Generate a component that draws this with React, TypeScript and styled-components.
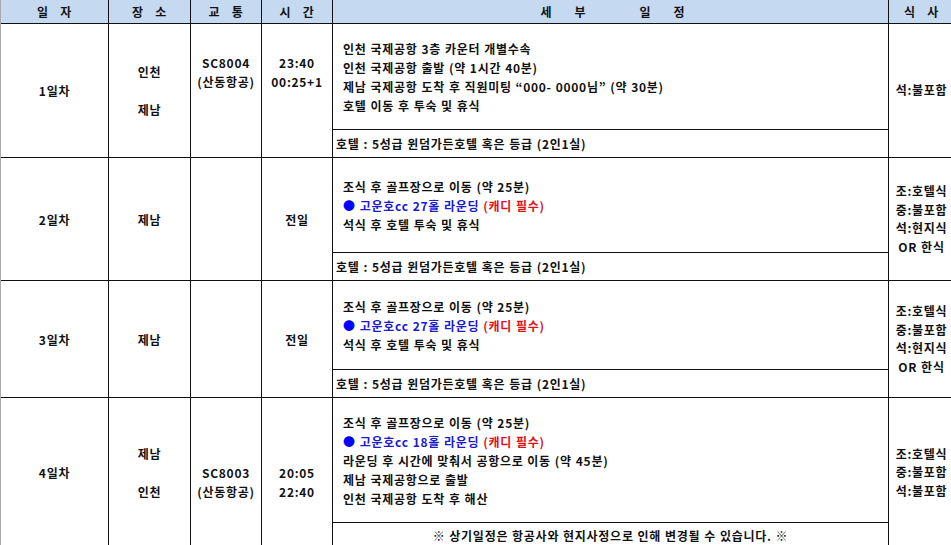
import React from 'react';
import styled, { createGlobalStyle } from 'styled-components';

const GlobalStyle = createGlobalStyle`
  html, body {
    margin: 0;
    padding: 0;
    background: #fff;
    overflow: hidden;
  }
  body {
    font-family: 'Noto Sans CJK KR', 'Noto Sans', sans-serif;
    font-weight: 700;
    font-size: 12px;
    letter-spacing: 0.72px;
    word-spacing: 0.5px;
    color: #111;
  }
`;

type TDay = {
  label: string;
  place: string;
  flight: string;
  time: string;
  details: React.ReactNode[];
  footer: string;
  footerCenter?: boolean;
  meals: string;
  detailH: number;
  footerH: number;
};

const Golf: React.FC<{ holes: number }> = ({ holes }) => (
  <>
    <Dot>●</Dot> <Blue>고운호cc {holes}홀 라운딩</Blue> <Red>(캐디 필수)</Red>
  </>
);

const HOTEL = '호텔 : 5성급 윈덤가든호텔 혹은 등급 (2인1실)';

const DAYS: TDay[] = [
  {
    label: '1일차',
    place: '인천\n\n제남',
    flight: 'SC8004\n(산동항공)\n\n\n',
    time: '23:40\n00:25+1\n\n\n',
    details: [
      '인천 국제공항 3층 카운터 개별수속',
      '인천 국제공항 출발 (약 1시간 40분)',
      '제남 국제공항 도착 후 직원미팅 “000- 0000님” (약 30분)',
      '호텔 이동 후 투숙 및 휴식'
    ],
    footer: HOTEL,
    meals: '석:불포함',
    detailH: 106,
    footerH: 28
  },
  {
    label: '2일차',
    place: '제남',
    flight: '',
    time: '전일',
    details: ['조식 후 골프장으로 이동 (약 25분)', <Golf holes={27} />, '석식 후 호텔 투숙 및 휴식'],
    footer: HOTEL,
    meals: '조:호텔식\n중:불포함\n석:현지식\nOR 한식',
    detailH: 95,
    footerH: 28
  },
  {
    label: '3일차',
    place: '제남',
    flight: '',
    time: '전일',
    details: ['조식 후 골프장으로 이동 (약 25분)', <Golf holes={27} />, '석식 후 호텔 투숙 및 휴식'],
    footer: HOTEL,
    meals: '조:호텔식\n중:불포함\n석:현지식\nOR 한식',
    detailH: 89,
    footerH: 28
  },
  {
    label: '4일차',
    place: '제남\n\n인천',
    flight: '\nSC8003\n(산동항공)',
    time: '\n20:05\n22:40',
    details: [
      '조식 후 골프장으로 이동 (약 25분)',
      <Golf holes={18} />,
      '라운딩 후 시간에 맞춰서 공항으로 이동 (약 45분)',
      '제남 국제공항으로 출발',
      '인천 국제공항 도착 후 해산'
    ],
    footer: '※ 상기일정은 항공사와 현지사정으로 인해 변경될 수 있습니다. ※',
    footerCenter: true,
    meals: '조:호텔식\n중:불포함\n석:불포함',
    detailH: 125,
    footerH: 25
  }
];

const App: React.FC = () => {
  const rows = ['24px', ...DAYS.flatMap((d) => [`${d.detailH}px`, `${d.footerH}px`])].join(' ');

  return (
    <>
      <GlobalStyle />
      <Sheet style={{ gridTemplateRows: rows }}>
        <HeadCell>일 자</HeadCell>
        <HeadCell>장 소</HeadCell>
        <HeadCell>교 통</HeadCell>
        <HeadCell>시 간</HeadCell>
        <HeadCell>
          <HeadChar $gap={4}>세</HeadChar>
          <HeadChar $gap={23}>부</HeadChar>
          <HeadChar $gap={54}>일</HeadChar>
          <HeadChar $gap={23}>정</HeadChar>
        </HeadCell>
        <HeadCell>식 사</HeadCell>
        {DAYS.map((d) => (
          <React.Fragment key={d.label}>
            <Cell>{d.label}</Cell>
            <Cell>{d.place}</Cell>
            <Cell>{d.flight}</Cell>
            <Cell>{d.time}</Cell>
            <DetailCell>
              {d.details.map((line, i) => (
                <Line key={i}>{line}</Line>
              ))}
            </DetailCell>
            <Cell $last>{d.meals}</Cell>
            <FooterCell $center={d.footerCenter}>{d.footer}</FooterCell>
          </React.Fragment>
        ))}
      </Sheet>
    </>
  );
};

export default App;

const Sheet = styled.div`
  display: grid;
  grid-template-columns: 108px 82px 71px 71px 556px 66px;
  width: max-content;
  border-left: 1px solid #a9a9a9;
  line-height: 19px;
`;

const HeadCell = styled.div`
  display: flex;
  align-items: center;
  justify-content: center;
  background: #c5d9f1;
  border-right: 1px solid #111;
  border-bottom: 1px solid #111;
  white-space: pre;
  word-spacing: 8px;
  padding-bottom: 1px;
`;

const HeadChar = styled.span<{ $gap?: number }>`
  margin-left: ${(p) => p.$gap ?? 0}px;
  letter-spacing: 0;
`;

const Cell = styled.div<{ $last?: boolean }>`
  grid-row: span 2;
  display: flex;
  align-items: center;
  justify-content: center;
  text-align: center;
  white-space: pre-line;
  border-right: 1px solid #111;
  border-bottom: 1px solid #111;
  line-height: ${(p) => (p.$last ? '18.5px' : '19px')};
`;

const DetailCell = styled.div`
  display: flex;
  flex-direction: column;
  justify-content: center;
  padding-left: 10px;
  border-right: 1px solid #111;
  border-bottom: 1px solid #111;
`;

const Line = styled.div`
  white-space: nowrap;
`;

const FooterCell = styled.div<{ $center?: boolean }>`
  display: flex;
  align-items: center;
  justify-content: ${(p) => (p.$center ? 'center' : 'flex-start')};
  padding-left: ${(p) => (p.$center ? '0' : '3px')};
  border-right: 1px solid #111;
  border-bottom: 1px solid #111;
  white-space: nowrap;
`;

const Dot = styled.span`
  color: #0000ff;
`;

const Blue = styled.span`
  color: #1a1ad0;
`;

const Red = styled.span`
  color: #e0101c;
`;
